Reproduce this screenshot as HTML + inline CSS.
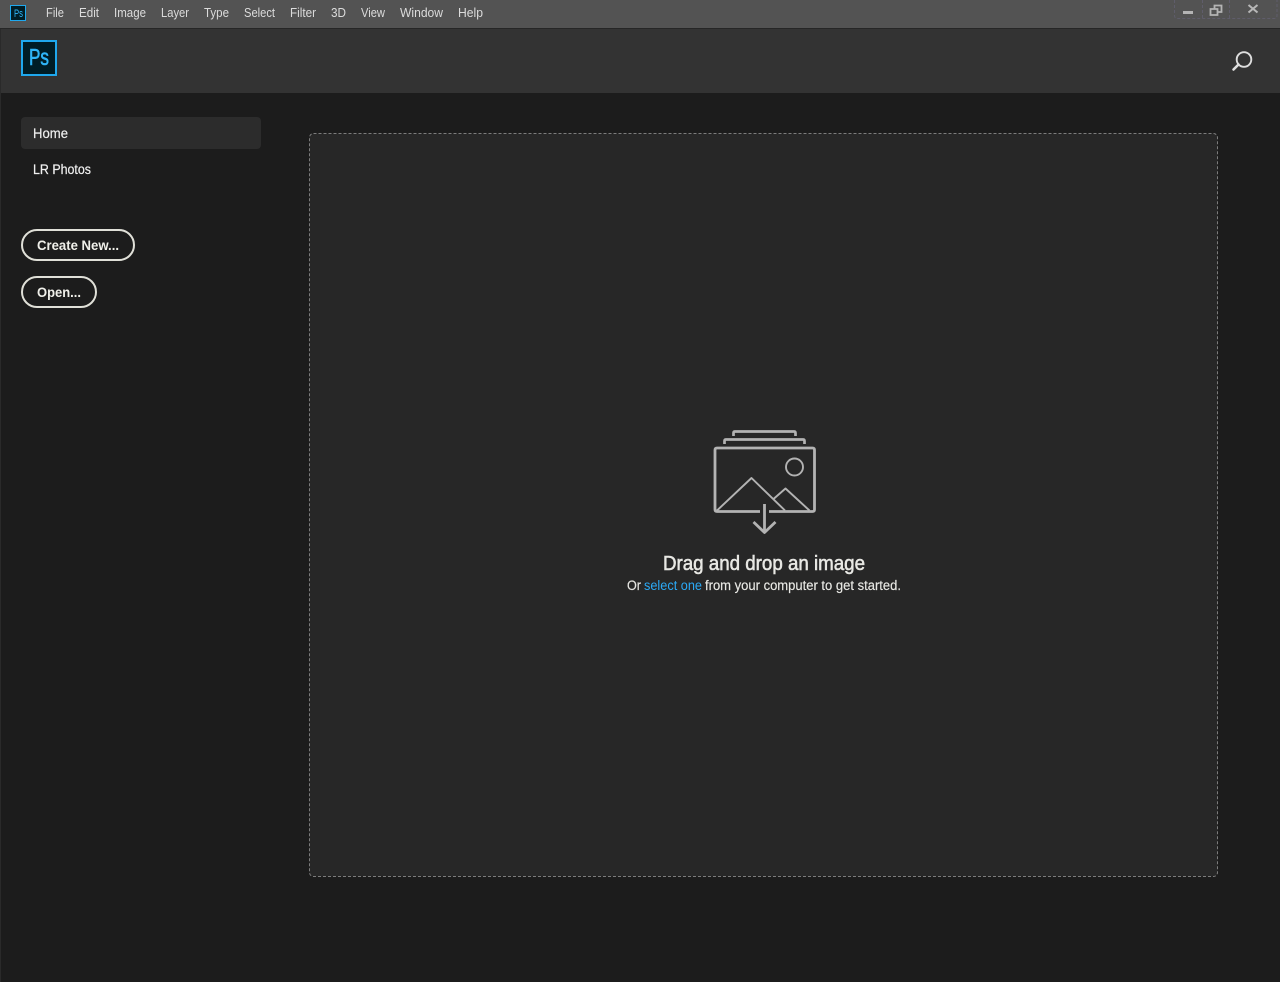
<!DOCTYPE html>
<html lang="en">
<head>
<meta charset="utf-8">
<title>Photoshop</title>
<style>
html,body{margin:0;padding:0;background:#1c1c1c;width:1280px;height:982px;overflow:hidden}
svg{display:block;position:absolute;left:0;top:0}
text{font-family:"Liberation Sans",sans-serif}
.m{font-size:12.5px;fill:#dcdcdc}
.n{font-size:14px;fill:#f0f0f0;stroke:#f0f0f0;stroke-width:.2}
.b{font-size:14px;fill:#f0f0ea;font-weight:700}
.s{font-size:13.5px;fill:#e8e8e4;stroke:#e8e8e4;stroke-width:.15}
</style>
</head>
<body>
<svg width="1280" height="982" viewBox="0 0 1280 982" xmlns="http://www.w3.org/2000/svg">
  <rect width="1280" height="982" fill="#1c1c1c"/>
  <rect width="1280" height="28" fill="#535353"/>
  <rect y="28" width="1280" height="1" fill="#262626"/>
  <rect y="29" width="1280" height="64" fill="#333333"/>
  <rect x="0" y="29" width="1" height="953" fill="#2a2a2a"/>

  <!-- small logo -->
  <rect x="10.5" y="5.5" width="15" height="15" fill="#001d26" stroke="#1fa8ee" stroke-width="1"/>
  <text x="14" y="17" font-size="11" fill="#2fb5f8" textLength="9" lengthAdjust="spacingAndGlyphs">Ps</text>

  <!-- menu -->
  <text class="m" x="46" y="17" textLength="18" lengthAdjust="spacingAndGlyphs">File</text>
  <text class="m" x="79" y="17" textLength="20" lengthAdjust="spacingAndGlyphs">Edit</text>
  <text class="m" x="114" y="17" textLength="32" lengthAdjust="spacingAndGlyphs">Image</text>
  <text class="m" x="161" y="17" textLength="28" lengthAdjust="spacingAndGlyphs">Layer</text>
  <text class="m" x="204" y="17" textLength="25" lengthAdjust="spacingAndGlyphs">Type</text>
  <text class="m" x="244" y="17" textLength="31" lengthAdjust="spacingAndGlyphs">Select</text>
  <text class="m" x="290" y="17" textLength="26" lengthAdjust="spacingAndGlyphs">Filter</text>
  <text class="m" x="331" y="17" textLength="15" lengthAdjust="spacingAndGlyphs">3D</text>
  <text class="m" x="361" y="17" textLength="24" lengthAdjust="spacingAndGlyphs">View</text>
  <text class="m" x="400" y="17" textLength="43" lengthAdjust="spacingAndGlyphs">Window</text>
  <text class="m" x="458" y="17" textLength="25" lengthAdjust="spacingAndGlyphs">Help</text>

  <!-- window controls -->
  <path d="M1174.5 0V15.5Q1174.5 18.5 1177.5 18.5H1274Q1277 18.5 1277 15.5V0M1202.5 0V18M1229.5 0V18" fill="none" stroke="#5f5d6b" stroke-width="1" stroke-dasharray="3 2"/>
  <rect x="1183" y="11" width="10" height="3" fill="#b4b4b4"/>
  <path d="M1214.5 9V5.500H1221.500V12H1218M1210.500 9H1217.500V15H1210.500Z" fill="none" stroke="#b4b4b4" stroke-width="1.800"/>
  <path d="M1248.500 5L1257.500 12.500M1257.500 5L1248.500 12.500" fill="none" stroke="#b8b8b8" stroke-width="2"/>

  <!-- big logo -->
  <rect x="22" y="41" width="34" height="34" fill="#001d26" stroke="#1fa8ee" stroke-width="2"/>
  <text x="29" y="65" font-size="23" fill="#2fb5f8" stroke="#2fb5f8" stroke-width=".6" textLength="20" lengthAdjust="spacingAndGlyphs">Ps</text>

  <!-- search -->
  <circle cx="1244" cy="59.500" r="7.300" fill="none" stroke="#dedede" stroke-width="1.900"/>
  <path d="M1238.500 64.500L1233.500 69.500" fill="none" stroke="#dedede" stroke-width="2.600" stroke-linecap="round"/>

  <!-- sidebar -->
  <rect x="21" y="117" width="240" height="32" rx="4" fill="#2c2c2c"/>
  <text class="n" x="33" y="138" textLength="35" lengthAdjust="spacingAndGlyphs">Home</text>
  <text class="n" x="33" y="174" textLength="58" lengthAdjust="spacingAndGlyphs">LR Photos</text>

  <rect x="22" y="230" width="112" height="30" rx="15" fill="none" stroke="#e0e0d8" stroke-width="2"/>
  <text class="b" x="37" y="250" textLength="82" lengthAdjust="spacingAndGlyphs">Create New...</text>
  <rect x="22" y="277" width="74" height="30" rx="15" fill="none" stroke="#e0e0d8" stroke-width="2"/>
  <text class="b" x="37" y="297" textLength="44" lengthAdjust="spacingAndGlyphs">Open...</text>

  <!-- drop zone -->
  <rect x="309.500" y="133.500" width="908" height="743" rx="4" fill="#272727" stroke="#7c7c7c" stroke-width="1" stroke-dasharray="3 2"/>

  <!-- drop icon -->
  <g fill="none" stroke="#b3b3b3" stroke-linejoin="round">
    <path d="M733.500 436V433Q733.500 431.500 735 431.500H794Q795.500 431.500 795.500 433V436" stroke-width="2.700"/>
    <path d="M724.500 444V441Q724.500 439.500 726 439.500H803Q804.500 439.500 804.500 441V444" stroke-width="2.700"/>
    <path d="M760 511.500H717Q715 511.500 715 509.500V450Q715 448 717 448H812.500Q814.500 448 814.500 450V509.500Q814.500 511.500 812.500 511.500H769" stroke-width="2.800"/>
    <circle cx="794.500" cy="467" r="8.500" stroke-width="1.900"/>
    <path d="M717 510.500L751.500 478L785 510.500" stroke-width="1.900"/>
    <path d="M773.500 499L785.500 488.500L809.500 510.500" stroke-width="1.900"/>
    <path d="M764.500 504V532M753.500 522L764.500 532.500L775.500 522" stroke-width="2.800"/>
  </g>

  <text x="663" y="570" font-size="20" fill="#e8e8e4" stroke="#e8e8e4" stroke-width=".55" textLength="202" lengthAdjust="spacingAndGlyphs">Drag and drop an image</text>
  <text class="s" x="627" y="590" textLength="14" lengthAdjust="spacingAndGlyphs">Or</text>
  <text x="644" y="590" font-size="13.5" fill="#2ba9f5" textLength="58" lengthAdjust="spacingAndGlyphs">select one</text>
  <text class="s" x="705" y="590" textLength="196" lengthAdjust="spacingAndGlyphs">from your computer to get started.</text>
</svg>
</body>
</html>
